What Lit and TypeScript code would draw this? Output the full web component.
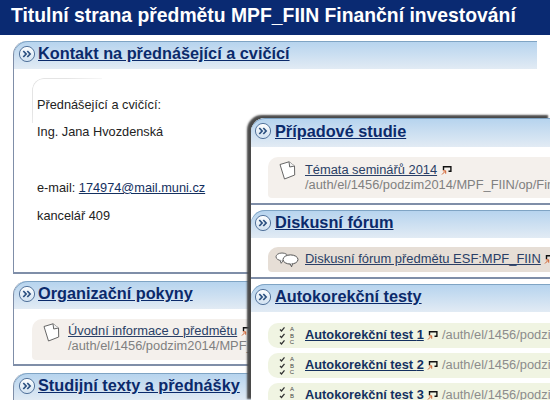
import { LitElement, html, css, svg } from "lit";
import { customElement } from "lit/decorators.js";

const chevron = html`<svg class="chev" width="18" height="18" viewBox="0 0 18 18">
  <defs><linearGradient id="cg" x1="0" y1="0" x2="0" y2="1"><stop offset="0" stop-color="#fff"/><stop offset="1" stop-color="#cfe0f0"/></linearGradient></defs>
  <circle cx="9" cy="9" r="7.6" fill="url(#cg)" stroke="#54749c" stroke-width="1"/>
  <path d="M5.3 6l2.8 3-2.8 3M9.3 6l2.8 3-2.8 3" fill="none" stroke="#2c5080" stroke-width="1.7"/>
</svg>`;

const ext = html`<svg class="ext" width="11" height="10" viewBox="0 0 11 10">
  <path d="M2.5 5V1.7h7.4v4.6H7.5" fill="none" stroke="#111" stroke-width="1.4"/>
  <path d="M1 9.5l3.2-3.2M1.8 5.8h2.9v2.9" fill="none" stroke="#d2612e" stroke-width="1"/>
</svg>`;

const page = html`<svg class="ico" width="20" height="20" viewBox="0 0 20 20">
  <path d="M1 3.5L10 .8 15.5 5 15.7 14 5.5 18Z" fill="#fff" stroke="#666" stroke-width="1"/>
  <path d="M10 .8L10.7 6 15.5 5" fill="#f2f2f2" stroke="#666" stroke-width="1"/>
</svg>`;

const bubble = html`<svg class="ico" width="24" height="16" viewBox="0 0 24 16">
  <ellipse cx="7" cy="4.8" rx="6" ry="3.8" fill="#fff" stroke="#666"/>
  <path d="M5 8.3l1.2 3 2-3" fill="#fff" stroke="#666"/>
  <ellipse cx="15.5" cy="7.5" rx="7.5" ry="4.6" fill="#fff" stroke="#555"/>
  <path d="M15 11.8l1.6 3 .9-3.2" fill="#fff" stroke="#555"/>
</svg>`;

const tick = (y: number) => svg`<path d="M1 ${y}l1.5 1.5 3-3.6" fill="none" stroke="#333" stroke-width="1.3"/>`;
const quiz = html`<svg class="ico" width="20" height="20" viewBox="0 0 20 20">
  ${tick(3.5)}${tick(10)}${tick(16.5)}
  <text x="13" y="5" class="abc">A</text>
  <text x="13" y="11.5" class="abc">B</text>
  <text x="13" y="18" class="abc">C</text>
</svg>`;

@customElement("app-root")
export class AppRoot extends LitElement {
  static styles = css`
    :host { display: block; width: 550px; height: 400px; overflow: hidden; position: relative; background: #fff;
      font-family: "Liberation Sans", Arial, sans-serif; color: #333; }
    .top { height: 35px; background: #0a2a72; color: #fff; font-size: 19.35px; font-weight: bold; line-height: 31px; padding-left: 11px; white-space: nowrap; overflow: hidden; }
    .left { display: flex; flex-direction: column; gap: 7px; padding: 6px 0 0 13px; width: 537px; box-sizing: border-box; }
    .sec { background: #fff; border-left: 1px solid #7f8ea8; border-bottom: 2px solid #7f8ea8; border-top-left-radius: 14px; box-sizing: border-box; }
    .head { height: 28px; box-sizing: border-box; display: flex; align-items: center; gap: 2px; padding: 0 0 3px 4px; border-top-left-radius: 14px;
      background: linear-gradient(#b5d3ee, #e2ebf4); box-shadow: inset 0 1px 0 #7fa4c4; }
    .head a { font-size: 16.3px; font-weight: bold; color: #0b2a6b; text-decoration: underline; white-space: nowrap; }
    .chev { flex: none; }
    .s1 { height: 233px; }
    .contact { position: relative; margin: 9px 0 0 18px; padding: 19px 0 0 5px; font-size: 12.75px; line-height: 15px; color: #222; }
    .contact::before { content: ""; position: absolute; left: 0; top: 0; width: 70px; height: 45px; box-sizing: border-box;
      border-top: 1px solid #e4e4e4; border-left: 1px solid #e4e4e4; border-top-left-radius: 12px;
      -webkit-mask-image: linear-gradient(135deg, #000 30%, transparent 75%); mask-image: linear-gradient(135deg, #000 30%, transparent 75%); }
    .contact p { margin: 0 0 12px; white-space: nowrap; }
    .contact p.gap { margin-top: 41px; margin-bottom: 13px; }
    .contact a { color: #14305f; text-decoration: underline; }
    .s2 { height: 85px; }
    .s3 { height: 60px; border-bottom: 0; }
    .body { padding: 10px 0 0 18px; }
    .item { display: flex; align-items: flex-start; gap: 5px; background: #f4f0ec; border-top-left-radius: 10px; border-bottom-left-radius: 4px;
      padding: 4px 0 0 11px; height: 41px; box-sizing: border-box; font-size: 12.85px; line-height: 14.5px; white-space: nowrap; overflow: hidden; }
    .item .txt { padding-top: 1px; }
    .item a { color: #2a3f66; text-decoration: underline; }
    .item .path { color: #808080; }
    .ico { flex: none; display: block; }
    .ext { vertical-align: -1px; margin-left: 0; }
    .abc { font-size: 6px; fill: #444; text-anchor: middle; font-family: "Liberation Sans", sans-serif; }

    .win { position: absolute; left: 251px; top: 118px; width: 299px; height: 282px; background: #fff;
      border-top-left-radius: 14px; box-shadow: -3px -2px 2px 1px #4a4a4a; overflow: hidden; display: flex; flex-direction: column; }
    .win .sec { border-left: 0; flex: none; width: 420px; }
    .win .head { padding-left: 3px; gap: 3px; }
    .win .body { padding-left: 17px; }
    .win .item { gap: 6px; }
    .w1 { height: 87px; }
    .w1 .head { height: 29px; }
    .w1 .txt { padding-top: 2px; }
    .w2 { height: 69px; margin-top: 5px; }
    .w2 .body { padding-top: 9px; }
    .w3 { margin-top: 5px; border-bottom: 0 !important; }
    .win .forum { background: #e6ded6; height: 25px; padding: 0 0 0 7px; align-items: center; gap: 6px; font-size: 12.95px; }
    .forum .txt { padding-top: 0; }
    .win .quiz { background: #f0f4e2; height: 25px; padding: 0 0 0 11px; gap: 6px; margin-bottom: 5px; align-items: center; border-radius: 10px 0 0 10px; }
    .quiz .txt { padding-top: 0; }
    .quiz .path { color: #8c8c8c; }
    .quiz a { font-weight: bold; font-size: 12.8px; color: #14305f; }
    .w3 .body { padding-top: 11px; }
  `;

  render() {
    return html`
      <div class="top">Titulní strana předmětu MPF_FIIN Finanční investování</div>
      <div class="left">
        <div class="sec s1">
          <div class="head">${chevron}<a>Kontakt na přednášející a cvičící</a></div>
          <div class="contact">
            <p>Přednášející a cvičící:</p>
            <p>Ing. Jana Hvozdenská</p>
            <p class="gap">e-mail: <a>174974@mail.muni.cz</a></p>
            <p>kancelář 409</p>
          </div>
        </div>
        <div class="sec s2">
          <div class="head">${chevron}<a>Organizační pokyny</a></div>
          <div class="body">
            <div class="item">${page}<div class="txt"><a>Úvodní informace o předmětu</a> ${ext}<br /><span class="path">/auth/el/1456/podzim2014/MPF_FIIN/op/Fin.pdf</span></div></div>
          </div>
        </div>
        <div class="sec s3">
          <div class="head">${chevron}<a>Studijní texty a přednášky</a></div>
        </div>
      </div>
      <div class="win">
        <div class="sec w1">
          <div class="head">${chevron}<a>Případové studie</a></div>
          <div class="body">
            <div class="item">${page}<div class="txt"><a>Témata seminářů 2014</a> ${ext}<br /><span class="path">/auth/el/1456/podzim2014/MPF_FIIN/op/Fin.pdf</span></div></div>
          </div>
        </div>
        <div class="sec w2">
          <div class="head">${chevron}<a>Diskusní fórum</a></div>
          <div class="body">
            <div class="item forum">${bubble}<div class="txt"><a>Diskusní fórum předmětu ESF:MPF_FIIN</a> ${ext}</div></div>
          </div>
        </div>
        <div class="sec w3">
          <div class="head">${chevron}<a>Autokorekční testy</a></div>
          <div class="body">
            ${[1, 2, 3].map((n) => html`<div class="item quiz">${quiz}<div class="txt"><a>Autokorekční test ${n}</a> ${ext} <span class="path">/auth/el/1456/podzim2014/MPF_FIIN/</span></div></div>`)}
          </div>
        </div>
      </div>
    `;
  }
}
